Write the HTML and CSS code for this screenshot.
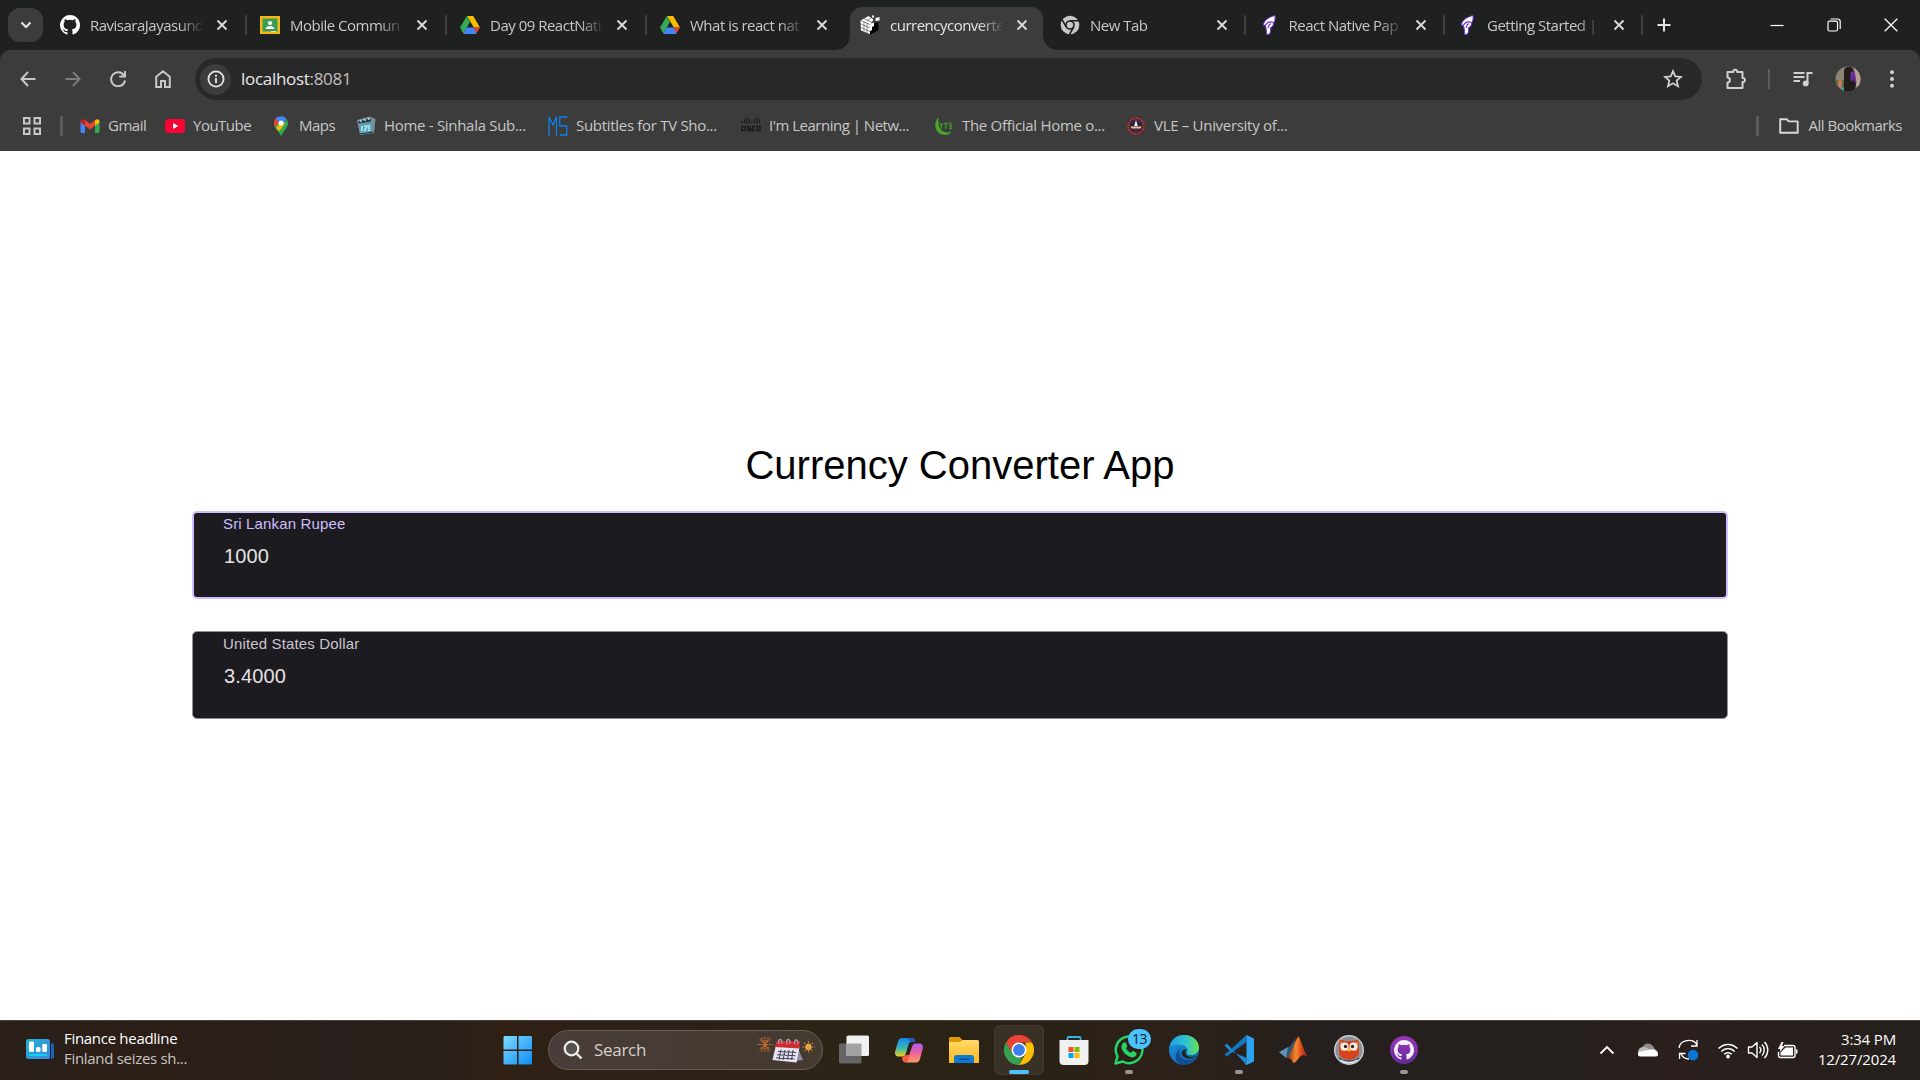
FILE: index.html
```html
<!DOCTYPE html>
<html lang="en">
<head>
<meta charset="utf-8">
<title>currencyconverter</title>
<link rel="stylesheet" href="styles.css">
</head>
<body>
<svg class="defs" width="0" height="0">
  <defs>
    <linearGradient id="gWin" x1="0" y1="0" x2="1" y2="1"><stop offset="0" stop-color="#7fdcff"/><stop offset="1" stop-color="#0a8cf5"/></linearGradient>
    <linearGradient id="gNews" x1="0" y1="0" x2="1" y2="1"><stop offset="0" stop-color="#22b5cf"/><stop offset="1" stop-color="#3b85e0"/></linearGradient>
    <linearGradient id="gCopA" x1="0" y1="0" x2="0" y2="1"><stop offset="0" stop-color="#1684ea"/><stop offset=".55" stop-color="#37b8b2"/><stop offset="1" stop-color="#f4d01c"/></linearGradient>
    <linearGradient id="gCopB" x1="0" y1="0" x2="0" y2="1"><stop offset="0" stop-color="#a95cf0"/><stop offset=".5" stop-color="#ef5f9e"/><stop offset="1" stop-color="#ff9c62"/></linearGradient>
    <linearGradient id="gFold" x1="0" y1="0" x2="0" y2="1"><stop offset="0" stop-color="#ffd969"/><stop offset="1" stop-color="#fbb91e"/></linearGradient>
    <linearGradient id="gEdgeA" x1="0" y1="0" x2="1" y2="0"><stop offset="0" stop-color="#1c9fe2"/><stop offset=".55" stop-color="#2fc3d2"/><stop offset="1" stop-color="#66e04e"/></linearGradient>
    <linearGradient id="gEdgeB" x1="0" y1="0" x2="1" y2="1"><stop offset="0" stop-color="#1b9be2"/><stop offset="1" stop-color="#0c59a4"/></linearGradient>
    <linearGradient id="gMat" x1="0" y1="0" x2="1" y2="0"><stop offset="0" stop-color="#7c1e14"/><stop offset=".45" stop-color="#f58a2d"/><stop offset=".7" stop-color="#d94b1c"/><stop offset="1" stop-color="#8d1d12"/></linearGradient>
    <linearGradient id="gGit" x1="0" y1="0" x2="0" y2="1"><stop offset="0" stop-color="#9a35b8"/><stop offset="1" stop-color="#652b98"/></linearGradient>
    <symbol id="close" viewBox="0 0 12 12"><path d="M1.500 1.500l9 9M10.500 1.500l-9 9" stroke="#d8d8d8" stroke-width="1.900"/></symbol>
    <symbol id="github" viewBox="0 0 16 16"><path d="M8 0a8 8 0 0 0-2.53 15.59c.4.07.55-.17.55-.38v-1.49c-2.23.49-2.7-.94-2.7-.94-.36-.93-.89-1.17-.89-1.17-.73-.5.05-.49.05-.49.81.06 1.23.83 1.23.83.72 1.23 1.88.87 2.34.67.07-.52.28-.87.5-1.07-1.77-.2-3.64-.89-3.64-3.95 0-.87.31-1.59.83-2.15-.09-.2-.36-1.02.07-2.12 0 0 .68-.22 2.2.82a7.6 7.6 0 0 1 4 0c1.53-1.04 2.2-.82 2.2-.82.44 1.1.17 1.92.08 2.12.51.56.82 1.28.82 2.15 0 3.07-1.87 3.75-3.65 3.95.29.25.54.73.54 1.48v2.19c0 .21.15.46.55.38A8 8 0 0 0 8 0z"/></symbol>
    <symbol id="drive" viewBox="0 0 20 18"><path fill="#fbbc04" d="M7 0h6.200L20 11.400h-6.200z"/><path fill="#34a853" d="M6.800 0L0 11.600l3.400 6L10 6z"/><path fill="#ea4335" d="M13.800 11.400H20l-3.800 6.400z"/><path fill="#4285f4" d="M6.400 11.600h7.300l2.800 6.300H3.300z"/></symbol>
    <symbol id="feather" viewBox="0 0 20 20"><path d="M16 .500C10 2 5 5 4.200 10.500l2.300-.6C6.500 12.500 8 15 7.500 19.500l2.800-.3c1.500-2 1.500-4 1-6.500 2.200-.7 3.200-2 3.200-4.600C15.700 6.500 16.500 4 16 .500z" fill="#fff" stroke="#6e32d6" stroke-width="1"/><path d="M6.500 10c2-3 4-4 8-2.500M9 13c.5-2.500 1.200-3.500 2.700-4.500" stroke="#6e32d6" stroke-width="1.200" fill="none"/></symbol>
  </defs>
</svg>
<div class="screen">

<header class="browser">
  <div class="tabstrip">
    <button class="tab-search"><svg width="12" height="8" viewBox="0 0 12 8"><path d="M1.500 1.500L6 6l4.500-4.500" fill="none" stroke="#e8e8e8" stroke-width="2"/></svg></button>
    <div class="tab"><svg class="fav" fill="#fff"><use href="#github"/></svg><span class="label">RavisaraJayasund</span><svg class="x"><use href="#close"/></svg></div>
    <div class="tab"><svg class="fav" viewBox="0 0 20 20"><path fill="#f4b915" d="M0 1h20v18H0z"/><path fill="#3c9c56" d="M2.500 3.500h15v13h-15z"/><circle cx="10" cy="8" r="2.100" fill="#fff"/><path fill="#fff" d="M5.500 14c.5-4 8.500-4 9 0z"/><path fill="#d9d9d9" d="M11 16h5v1h-5z"/></svg><span class="label">Mobile Commun</span><svg class="x"><use href="#close"/></svg></div>
    <div class="tab"><svg class="fav drv"><use href="#drive"/></svg><span class="label">Day 09 ReactNati</span><svg class="x"><use href="#close"/></svg></div>
    <div class="tab nosep"><svg class="fav drv"><use href="#drive"/></svg><span class="label">What is react nat</span><svg class="x"><use href="#close"/></svg></div>
    <div class="tab active"><svg class="fav" viewBox="0 0 20 20"><path fill="#fff" d="M.500 5.500L8.500 1l5 3.500-2.500 4v11L1 15.500z"/><path fill="#000" d="M10 9.500l8.500-2.500V15L10 20z"/><path fill="#fff" d="M10 9l4-1.500v3.500l-2 1v3l-2 1z"/><path d="M1 5.500l9 4M1 9l9 4M1 12.500l9 4M4 6.500v10M7 8v10M4 3.500l8 4M7 6l4-3" stroke="#3c3c3c" stroke-width=".6" fill="none"/><path fill="#fff" d="M15.500 3l4-1v3.500l-4 .5zM12 .500h2v2h-2z"/></svg><span class="label">currencyconverte</span><svg class="x"><use href="#close"/></svg></div>
    <div class="tab narrow"><svg class="fav" viewBox="0 0 20 20"><circle cx="10" cy="10" r="9.300" fill="#c7c7c7"/><circle cx="10" cy="10" r="4" fill="#c7c7c7" stroke="#1f2020" stroke-width="1.600"/><path d="M10 5.800h9M6.300 12L2 4.600M13.700 12l-4.300 7.600" stroke="#1f2020" stroke-width="1.600"/></svg><span class="label">New Tab</span><svg class="x"><use href="#close"/></svg></div>
    <div class="tab narrow"><svg class="fav"><use href="#feather"/></svg><span class="label">React Native Pap</span><svg class="x"><use href="#close"/></svg></div>
    <div class="tab narrow"><svg class="fav"><use href="#feather"/></svg><span class="label">Getting Started |</span><svg class="x"><use href="#close"/></svg></div>
    <button class="plus"><svg width="14" height="14" viewBox="0 0 14 14"><path d="M7 .500v13M.500 7h13" stroke="#e3e3e3" stroke-width="2"/></svg></button>
    <div class="winctl">
      <svg width="14" height="14" viewBox="0 0 14 14"><path d="M.500 7.500h13" stroke="#fff" stroke-width="1.200"/></svg>
      <svg width="14" height="14" viewBox="0 0 14 14"><rect x="1" y="3.200" width="9.500" height="9.800" rx="1.500" fill="none" stroke="#fff" stroke-width="1.200"/><path d="M3.500 1h7.200a2.500 2.500 0 0 1 2.500 2.500V11" fill="none" stroke="#fff" stroke-width="1.200"/></svg>
      <svg width="14" height="14" viewBox="0 0 14 14"><path d="M.700.700l12.600 12.600M13.300.700L.700 13.300" stroke="#fff" stroke-width="1.300"/></svg>
    </div>
  </div>

  <div class="toolbar">
    <button class="tool"><svg width="16" height="16" viewBox="0 0 16 16"><path d="M15.500 8H1.500M8 1L1.500 8 8 15" fill="none" stroke="#c7c7c7" stroke-width="2"/></svg></button>
    <button class="tool"><svg width="16" height="16" viewBox="0 0 16 16"><path d="M.500 8h14M8 1l6.500 7L8 15" fill="none" stroke="#7c7c7c" stroke-width="2"/></svg></button>
    <button class="tool"><svg width="16" height="16" viewBox="0 0 16 16"><path d="M14 4.500A7 7 0 1 0 15 9.500M15 0v5.500H9.300" fill="none" stroke="#c7c7c7" stroke-width="2"/></svg></button>
    <button class="tool"><svg width="16" height="18" viewBox="0 0 16 18"><path d="M1.200 6.800L8 1.300l6.800 5.500V17H10v-6H6v6H1.200z" fill="none" stroke="#c7c7c7" stroke-width="2"/></svg></button>
    <div class="omnibox">
      <span class="info"><svg width="18" height="18" viewBox="0 0 18 18"><circle cx="9" cy="9" r="7.600" fill="none" stroke="#e3e3e3" stroke-width="1.800"/><path d="M9 8v5M9 4.800v1.900" stroke="#e3e3e3" stroke-width="1.900"/></svg></span>
      <span class="url">localhost<span>:8081</span></span>
      <svg class="star" width="20" height="20" viewBox="0 0 20 20"><path d="M10 2.200l2.300 5.200 5.700.5-4.300 3.700 1.300 5.600-5-3-5 3 1.300-5.600L2 7.900l5.700-.5z" fill="none" stroke="#d0d0d0" stroke-width="1.800"/></svg>
    </div>
    <button class="tool ext"><svg width="22" height="22" viewBox="0 0 22 22"><path d="M2.500 4H8.300C8 .900 12.500.900 12.200 4h5.300v6c3.300-.2 3.300 4.200 0 4v6h-15v-5.500c3.200 0 3.200-5 0-5z" fill="none" stroke="#d0d0d0" stroke-width="2" stroke-linejoin="round"/></svg></button>
    <i class="vsep"></i>
    <button class="tool media"><svg width="20" height="16" viewBox="0 0 20 16"><path d="M.500 2h11M.500 6h11M.500 10h6.500" stroke="#d0d0d0" stroke-width="2"/><path d="M14.500 12.500V2h5" fill="none" stroke="#d0d0d0" stroke-width="2"/><circle cx="12.700" cy="12.400" r="2.900" fill="#d0d0d0"/></svg></button>
    <svg class="avatar" viewBox="0 0 26 26"><clipPath id="av"><circle cx="13" cy="13" r="12.500"/></clipPath><g clip-path="url(#av)"><path fill="#8c8474" d="M0 0h26v26H0z"/><path fill="#627044" d="M0 14h9v12H0z"/><path fill="#b7a294" d="M19 0h7v20h-5z"/><path fill="#201c1a" d="M9 4c2-5 9-4 10 1l2 12-1 9H8l1-9z"/><path fill="#6b2f9c" d="M15.500 6l4-1 1 5 1 7-2-1-1-4-1 4-2-2z"/><path fill="#d07860" d="M4 13l3 2-1 8-3-3z"/><path fill="#38a39a" d="M6 22l3-1v5H6z"/></g></svg>
    <button class="tool menu"><svg width="6" height="20" viewBox="0 0 6 20" fill="#d0d0d0"><circle cx="3" cy="3.300" r="2"/><circle cx="3" cy="10" r="2"/><circle cx="3" cy="16.700" r="2"/></svg></button>
  </div>

  <nav class="bookmarks">
    <svg class="apps" width="20" height="20" viewBox="0 0 20 20" fill="none" stroke="#c7c7c7" stroke-width="2"><path d="M2 2h5.500v5.500H2zM12.500 2H18v5.500h-5.500zM2 12.500h5.500V18H2zM12.500 12.500H18V18h-5.500z"/></svg>
    <i class="vsep thick"></i>
    <a class="bm w1 tight"><svg viewBox="0 0 20 20"><path fill="#4285f4" d="M.500 5.500l4.500 3V17H2a1.500 1.500 0 0 1-1.500-1.500z"/><path fill="#34a853" d="M19.500 5.500L15 8.500V17h3a1.500 1.500 0 0 0 1.500-1.500z"/><path fill="#ea4335" d="M4 3.500l6 4.500 6-4.500v5.500l-6 4.500-6-4.500z"/><path fill="#c5221f" d="M.500 5.500C.500 3 3 2.500 5 4.200v5.300L.500 6.500z"/><path fill="#fbbc04" d="M19.500 5.500c0-2.500-2.500-3-4.500-1.300v5.300l4.500-3z"/></svg><span>Gmail</span></a>
    <a class="bm w2 tight"><svg viewBox="0 0 20 20"><rect y="3" width="20" height="14" rx="3.500" fill="#ff0033"/><path d="M8 7l5.300 3L8 13z" fill="#fff"/></svg><span>YouTube</span></a>
    <a class="bm w3 tight"><svg viewBox="0 0 20 20"><path fill="#34a853" d="M10 20c-1-4-7-7-7-13h14c0 6-6 8-7 13z"/><path fill="#fbbc04" d="M5 12L12 4l3 4-7 7z"/><path fill="#ea4335" d="M3 7c0-2 .600-3.500 1.500-4.500l4 3.500-4.500 5C3.300 9.500 3 8.500 3 7z"/><path fill="#4285f4" d="M4.500 2.500c3-3.500 9-3 11.500 1L11 9 8 6z"/><path fill="#34a853" d="M16 3.500c1.500 2.500 1 5.500-.500 7.500L10 20l-1.500-4z"/><circle cx="10" cy="7" r="2.500" fill="#fff"/></svg><span>Maps</span></a>
    <a class="bm w4"><svg viewBox="0 0 20 20"><path fill="#79919a" d="M1 4l13-3.500L19.500 3l-1.500 14-14 2z"/><path fill="#163f50" d="M2 5.500l13-3v3l-12 2z"/><path fill="#4faec3" d="M4 9l12-1.500-.500 8-10.500 2z"/><path d="M6 10v5M8 10h3l-2.500 5M13 9v6M4 4l1.500 2M8 3l1.500 2M12 2l1.500 2" stroke="#e4f1f2" stroke-width="1.200" fill="none"/><path d="M4 18l13-2" stroke="#1c333c"/></svg><span>Home - Sinhala Sub...</span></a>
    <a class="bm w5"><svg viewBox="0 0 20 20"><path d="M1 20V1l4 8 3.500-8v19M19.500 1h-7.700v9h7v9h-7" fill="none" stroke="#0b80e8" stroke-width="1.300"/></svg><span>Subtitles for TV Sho...</span></a>
    <a class="bm w6 tight"><svg viewBox="0 0 20 20"><path d="M1 5v2M3.500 3v4M6 1v7M8.500 3v4M11 5v2M13.500 3v4M16 1v7M18.500 3v4" stroke="#191919" stroke-width="1.100"/><path d="M4.500 10.500H2.200a2 2 0 0 0 0 4H4.500V10M9.500 10.500H7V12.500H9.500v2H6.500M14 10.500h-2.500v4H14M16 10.500h3v4h-3z" stroke="#191919" stroke-width="1.500" fill="none"/></svg><span>I'm Learning | Netw...</span></a>
    <a class="bm w7"><svg viewBox="0 0 20 20"><path d="M4 2C0 8 1 16 8 18c4 1 7 0 9-1.500C10 18 3 15 4 2z" fill="#4ba332" stroke="#4ba332" stroke-width=".8"/><path d="M5.500 7l2 2.500L9 7M7.500 9.500L7 13M10 7.500h4M12 7.500l-.5 5.500M18 7.500h-2.500V10h2v2.500H15" fill="none" stroke="#3c9427" stroke-width="1.400"/></svg><span>The Official Home o...</span></a>
    <a class="bm w8"><svg viewBox="0 0 20 20"><circle cx="10" cy="10" r="9.700" fill="#6b2433"/><circle cx="10" cy="10" r="8" fill="none" stroke="#a36a45" stroke-dasharray="1.500 1"/><circle cx="10" cy="10" r="6" fill="#292447"/><path fill="#fff" d="M10 4l1.700 6h-3.400z"/><path fill="#f0c08b" d="M4.500 10.500h11l-1 2H5.500z"/><path fill="#4b2a45" d="M6 13h8l-4 3z"/></svg><span>VLE – University of...</span></a>
    <i class="vsep thick last"></i>
    <a class="bm all tight"><svg viewBox="0 0 20 20"><path d="M1.200 3.200h6.500l2 2.200h9v11.400H1.200z" fill="none" stroke="#d8d8d8" stroke-width="1.900" stroke-linejoin="round"/></svg><span>All Bookmarks</span></a>
  </nav>
</header>

<main class="page">
  <h1>Currency Converter App</h1>
  <div class="field focused"><label>Sri Lankan Rupee</label><div class="value">1000</div></div>
  <div class="field"><label>United States Dollar</label><div class="value">3.4000</div></div>
</main>

<footer class="taskbar">
  <div class="widget">
    <svg width="28" height="20" viewBox="0 0 28 20"><rect x="20" y="4" width="8" height="16" rx="2.500" fill="#1665b8"/><path d="M24.500 3v17" stroke="#171a26"/><rect width="24" height="20" rx="2.500" fill="url(#gNews)"/><rect x="3" y="2.500" width="5" height="10.500" rx="1.200" fill="#fff"/><rect x="10" y="8" width="4.500" height="5" rx="1.500" fill="#fff"/><rect x="16.300" y="5" width="4.700" height="8" rx="1.200" fill="#fff"/><path d="M3 16h18" stroke="#10d1f1" stroke-width="2"/></svg>
    <div class="news"><span class="n1">Finance headline</span><span class="n2">Finland seizes sh...</span></div>
  </div>
  <svg class="start" width="30" height="30" viewBox="0 0 30 30"><path fill="url(#gWin)" d="M1.500 1H14v13.500H.500V2zM15.500 1H28l1 1v12.500H15.500zM.500 16H14v13.500H1.500l-1-1zM15.500 16H29v12.500l-1 1H15.500z"/></svg>
  <div class="search">
    <svg width="20" height="20" viewBox="0 0 20 20"><circle cx="8.500" cy="8.500" r="6.800" fill="#5b514c" stroke="#ececec" stroke-width="2.200"/><path d="M13.500 13.500l5 5" stroke="#ececec" stroke-width="2.400"/></svg>
    <span>Search</span>
    <svg class="cal" width="58" height="28" viewBox="0 0 58 28"><g stroke="#c9702d" stroke-width="1.200"><path d="M8 1v15M.500 8.500h15M2.700 3.200l10.600 10.600M13.300 3.200L2.700 13.800M4.500 1.500l7 14M11.500 1.500l-7 14" stroke-dasharray="2 .8"/></g><path fill="#8c8aa5" d="M41 12l5 12-7 1z"/><path fill="#e7e5f4" d="M18.500 11h24L39.500 26.500 15.500 24z"/><path fill="#d02c2e" d="M19.500 5H43l-.700 7.500L18 11z"/><path d="M21 15.500l18 1M20 18.700l18.500 1M19 21.800l18.500 1.200M24 13.500l-2 10M28 14l-2 10M32 14l-1.500 10M36 14l-1.500 10" stroke="#45435a" stroke-width="1.100"/><path d="M22 8c-2-6 4-6 3 0M30 8c-2-6 4-6 3 0M38 8.500c-2-6 4-6 3 0" fill="none" stroke="#a09fb1" stroke-width="1.300"/><circle cx="51.500" cy="11" r="3" fill="#ffc955"/><path d="M51.500 5v12M45.500 11h12M47.300 6.800l8.400 8.400M55.700 6.800l-8.400 8.400" stroke="#d99139" stroke-width="1.200" stroke-dasharray="1.500 .8"/></svg>
  </div>
  <div class="apps-row">
    <div class="app"><svg viewBox="0 0 30 30"><rect y="8.500" width="22.500" height="20" rx="1.500" fill="#646464"/><rect x="7.500" y=".500" width="22.500" height="20.500" rx="1.500" fill="#f1f1f1"/><path fill="#a2a2a2" d="M7.500 8.500h15V21h-15z"/></svg></div>
    <div class="app"><svg viewBox="0 0 30 30"><path fill="url(#gCopA)" d="M8 3h9.500c2.500 0 3 1.500 3.500 3.500h-2.500c-2.500 0-3.500 1-4.200 3.500L12 18c-.800 2.500-1.500 3.500-4 3.500H4.500c-3 0-4-2.500-3.200-5.500L4 6.500C4.700 4.200 6 3 8 3z"/><path fill="#2457cd" d="M14 3h3.500c2.500 0 3 1.500 3.500 3.500h-2.500C16 6.500 15 6 14 3z"/><path fill="url(#gCopB)" d="M22 27.500h-9.500c-2.500 0-4-1.500-4.500-4h3c2.500 0 3.500-1 4.200-3.500L18 12c.800-2.500 1.500-3.500 4-3.500h3.500c3 0 4 2.500 3.200 5.500L26 24c-.700 2.300-2 3.500-4 3.500z"/><path fill="#f45a3d" d="M8 22l4-2h3.500c-1 5-1.500 7-3.500 7s-3.500-2-4-5z"/></svg></div>
    <div class="app"><svg viewBox="0 0 30 30"><path fill="#dc9a0b" d="M0 3.500A1.500 1.500 0 0 1 1.500 2h9l3 3H28v10H0z"/><path fill="url(#gFold)" d="M0 7h11l3-2h14.500A1.500 1.500 0 0 1 30 6.500V28H0z"/><path fill="#0f7bd0" d="M5 28v-5.500a2.500 2.500 0 0 1 2.500-2.500h15a2.500 2.500 0 0 1 2.500 2.500V28z"/><path d="M10 24.300h10" stroke="#0a4d94" stroke-width="1.500"/></svg></div>
    <div class="app current"><svg viewBox="0 0 30 30"><path fill="#ea4335" d="M2 7.500A15 15 0 0 1 28 7.500H15L8.500 19z"/><path fill="#fbbc04" d="M28 7.500A15 15 0 0 1 15 30l6.500-11.200V7.500z"/><path fill="#34a050" d="M15 30A15 15 0 0 1 2 7.500l6.500 11.300L15 22.500l3.600-.5z"/><circle cx="15" cy="15" r="7.500" fill="#fff"/><circle cx="15" cy="15" r="5.900" fill="#3b7fe8"/></svg></div>
    <div class="app"><svg viewBox="0 0 30 30"><path d="M8.500 6V3a1 1 0 0 1 1-1h11a1 1 0 0 1 1 1v3" fill="none" stroke="#35b3e6" stroke-width="1.800"/><path d="M.500 5h29v21a4 4 0 0 1-4 4h-21a4 4 0 0 1-4-4z" fill="#f0f0f0"/><path fill="#f25022" d="M9.500 12h5v5h-5z"/><path fill="#7fba00" d="M15.500 12h5v5h-5z"/><path fill="#00a4ef" d="M9.500 18h5v5h-5z"/><path fill="#ffb900" d="M15.500 18h5v5h-5z"/></svg></div>
    <div class="app open"><svg viewBox="0 0 30 30"><path d="M1.500 28.500l2-7.200A13.300 13.300 0 1 1 8.800 26.500z" fill="none" stroke="#25d366" stroke-width="2.500" stroke-linejoin="round"/><path fill="#25d366" d="M10 7.500c1.500-.500 2 0 3.200 3.500.200.800-1 1.500-1.200 2.200 1.500 2.500 3 3.800 5 4.600.700-.300 1.300-1.700 2-1.700l3.500 1.700c.500 4-3.500 5-6 4.200C11.500 20.300 8 16 7.500 12.500c-.300-2 1-4.500 2.500-5z"/></svg><b class="badge">13</b></div>
    <div class="app"><svg viewBox="0 0 30 30"><circle cx="15" cy="15" r="15" fill="url(#gEdgeB)"/><path fill="url(#gEdgeA)" d="M.500 12C2 4 8 0 15 0c9 0 15 6 15 12.500 0 5-4 7.500-8 7.500-3 0-4.500-1-4-2 2-3-.500-7.500-6-8C7 9.500 2 10.500.500 12z"/><path fill="#134d94" d="M11 14c-3 8 4 14 16 9.500-5 6-13 8-18 4.500-4-4-2.500-11 2-14z"/><path fill="#282019" d="M17.500 14.500C15 17 16 22 23 22c3 0 5-1 6-2-3 4.500-14 5-16-.5-.800-2.500.5-5 4.500-5z"/></svg></div>
    <div class="app open"><svg viewBox="0 0 30 30"><path fill="#1378bd" d="M22.500 0L5.500 15.500.500 19.300l2.300 2.200L22.500 7z"/><path fill="#1b8bd5" d="M22.500 30L2.800 8.500.500 10.500l5 5L22.500 23z"/><path fill="#2ba3ee" d="M22.500 0L30 3.500v23L22.500 30l-2-1.500c1.500.5 2-.500 2-1.500z"/></svg></div>
    <div class="app"><svg viewBox="0 0 30 30"><path fill="#5a93b7" d="M0 17l9-5 3 7-5 4z"/><path fill="#34586f" d="M9 12c3 0 5-6 8-9l-5 17-5 3z"/><path fill="url(#gMat)" d="M19.500 1c2.500 4 5 15 9.500 21-4-2.500-6-3-9 1-2.500 3-4 5-6 5-1-3-2.500-5-7-5C13 20 15 7 19.500 1z"/></svg></div>
    <div class="app"><svg viewBox="0 0 30 30"><circle cx="15" cy="15" r="14.300" fill="#8a9198" stroke="#c9ced2" stroke-width="1.400"/><path fill="#d7431f" d="M5.500 4.500L11 6h8l5.500-1.500.5 13C25 27 5 27 5 17.500z"/><path fill="#f27b3b" d="M6 6l9 7 9-7-1 10H7z"/><circle cx="10.500" cy="11.500" r="4" fill="#f5f2e9"/><circle cx="19.500" cy="11.500" r="4" fill="#f5f2e9"/><circle cx="11.500" cy="11.500" r="1.700" fill="#392215"/><circle cx="18.500" cy="11.500" r="1.700" fill="#392215"/><path fill="#f8c437" d="M13.500 13.500h3L15 17.500z"/><path d="M5 23c5 4 15 4 20 0" stroke="#34495e" stroke-width="1.500" fill="none"/><path d="M6.500 25c5 3.500 12 3.500 17 0" stroke="#e7e9ec" stroke-width="1.500" fill="none"/></svg></div>
    <div class="app open"><svg viewBox="0 0 30 30"><circle cx="15" cy="15" r="14" fill="url(#gGit)"/><svg x="5" y="5" width="20" height="20" fill="#f4eff8"><use href="#github"/></svg></svg></div>
  </div>
  <div class="tray">
    <svg class="chev" width="16" height="10" viewBox="0 0 16 10"><path d="M1.500 8.500L8 2l6.500 6.500" fill="none" stroke="#fff" stroke-width="1.800"/></svg>
    <svg class="cloud" width="22" height="14" viewBox="0 0 22 14"><path fill="#8f8d8c" d="M5 5c2-6 10-6 12 0l4 4-9 3z"/><path fill="#bdbbba" d="M1 10c0-4 2.500-6 5.500-6C10 3.500 14 8 17 10l-5 3z"/><path fill="#fff" d="M3 13.500c-2 0-3-3-1-4.500L13 6.500c3-.500 5 0 7 2 2 2 1 5-1 5z"/></svg>
    <svg class="sync" width="22" height="22" viewBox="0 0 22 22"><path d="M2 9c1-9 15-10 18-2.500M20 1v6h-6M12 20c-4 0-6-1-8-5M8.500 14.500H2.500V20" fill="none" stroke="#fff" stroke-width="1.300"/><circle cx="16" cy="16" r="5.200" fill="#0878d8"/></svg>
    <svg class="wifi" width="22" height="17" viewBox="0 0 22 17"><path d="M1.500 6.500c5.500-5.500 13.500-5.500 19 0M4.300 9.500c4-4 9.400-4 13.400 0M7.200 12.300c2.200-2.200 5.400-2.200 7.600 0" fill="none" stroke="#fff" stroke-width="1.500"/><circle cx="11" cy="14.500" r="1.900" fill="#fff"/></svg>
    <svg class="vol" width="22" height="20" viewBox="0 0 22 20"><path d="M1.500 7h3.500l5-4.500v15L5 13H1.500z" fill="none" stroke="#fff" stroke-width="1.400" stroke-linejoin="round"/><path d="M12.500 7c1.600 1.700 1.600 4.300 0 6M15 4.500c3 3 3 8 0 11M17.500 2c4.300 4.500 4.300 11.500 0 16" fill="none" stroke="#fff" stroke-width="1.400"/></svg>
    <svg class="bat" width="22" height="18" viewBox="0 0 22 18"><path d="M7 4.500h9a2 2 0 0 1 2 2v8a2 2 0 0 1-2 2H3.500a2 2 0 0 1-2-2V11" fill="none" stroke="#fff" stroke-width="1.400"/><path fill="#fff" d="M8.500 6.500H16v8H3.500v-3zM19 8.500h1.500v4H19zM4.500 1L1 8h2.500l-1 3.500L7.500 5H5l1.500-4z"/></svg>
    <div class="clock"><span class="t">3:34 PM</span><span class="d">12/27/2024</span></div>
  </div>
</footer>
</div>
</body>
</html>
```
FILE: styles.css
```css
* { box-sizing: border-box; }
body { margin: 0; font-family: "Open Sans", "Noto Sans", sans-serif; overflow: hidden; }
button { border: 0; padding: 0; background: none; font: inherit; }
svg { display: block; flex: none; }
.defs { position: absolute; }
.screen { width: 1920px; height: 1080px; display: flex; flex-direction: column; background: #fff; }

/* Browser chrome */
.browser { height: 151px; background: #1f2020; flex: none; }
.tabstrip { height: 50px; display: flex; align-items: center; }
.tab-search { width: 35px; height: 34px; margin: 0 7px 0 8px; border-radius: 12px; background: #3c3c3c; display: grid; place-items: center; }
.tab { position: relative; width: 200px; height: 43px; margin-top: 7px; padding: 0 0 7px 10px; display: flex; align-items: center; flex: none; }
.tab.narrow { width: 198.500px; }
.fav { width: 20px; height: 20px; }
.fav.drv { width: 20px; height: 18px; }
.label { width: 112px; margin-left: 10px; font-size: 15px; line-height: 20px; letter-spacing: -.5px; white-space: nowrap; overflow: hidden; color: #c7c7c7; -webkit-mask-image: linear-gradient(90deg, #000 80%, transparent 102%); mask-image: linear-gradient(90deg, #000 80%, transparent 102%); }
.x { width: 12px; height: 12px; margin-left: 14px; }
.tab::after { content: ""; position: absolute; left: 195px; top: 8px; width: 2px; height: 20px; background: #404141; border-radius: 1px; }
.tab.narrow::after { left: 194px; }
.tab.nosep::after { display: none; }
.tab.active { width: 193px; margin-right: 7px; background: #3c3c3c; border-radius: 12px 12px 0 0; }
.tab.active .label { color: #e3e3e3; }
.tab.active::before, .tab.active::after { content: ""; position: absolute; left: -14px; top: auto; bottom: 0; width: 14px; height: 14px; border-radius: 0; background: radial-gradient(circle at 0 0, transparent 13.500px, #3c3c3c 14px); }
.tab.active::after { left: 193px; background: radial-gradient(circle at 100% 0, transparent 13.500px, #3c3c3c 14px); }
.plus { width: 40px; display: grid; place-items: center; margin-left: -2px; }
.winctl { margin-left: auto; padding-right: 22px; display: flex; gap: 43px; }

.toolbar { height: 58px; background: #3c3c3c; border-radius: 10px 10px 0 0; padding-left: 5px; display: flex; align-items: center; }
.tool { width: 45px; height: 40px; display: grid; place-items: center; flex: none; }
.omnibox { width: 1507px; height: 42px; margin-left: 10px; padding-left: 5px; border-radius: 21px; background: #282828; display: flex; align-items: center; flex: none; }
.info { width: 31px; height: 31px; border-radius: 50%; background: #3c3c3c; display: grid; place-items: center; }
.url { margin: 0 0 1px 10px; font-size: 17px; letter-spacing: -.3px; color: #e8e8e8; }
.url span { color: #c0c0c0; }
.star { margin: 0 19px 0 auto; }
.vsep { width: 2px; height: 20px; background: #5c5c5c; flex: none; }
.ext { width: 66px; padding-left: 2px; }
.media { width: 65px; }
.avatar { width: 26px; height: 26px; }
.menu { width: 62px; }

.bookmarks { height: 43px; background: #3c3c3c; padding: 0 18px 8px 22px; display: flex; align-items: center; }
.vsep.thick { width: 3px; border-radius: 1px; }
.apps { margin-right: 18px; }
.bm { display: flex; align-items: center; gap: 8px; font-size: 15px; line-height: 20px; letter-spacing: -.3px; color: #c7c7c7; white-space: nowrap; flex: none; }
.bm svg { width: 20px; height: 20px; }
.bm span { margin-top: -1px; }
.tight { letter-spacing: -.5px; }
.w1 { width: 85px; margin-left: 17px; }
.w2 { width: 106px; }
.w3 { width: 85px; }
.w4 { width: 192px; }
.w5 { width: 193px; }
.w6 { width: 193px; }
.w7 { width: 192px; }
.last { margin-left: auto; }
.all { margin-left: 20px; gap: 10px; }

/* Converter */
.page { flex: 1; display: flex; flex-direction: column; align-items: center; padding-top: 288px; font-family: "Liberation Sans", Arial, sans-serif; }
h1 { margin: 0 0 20px; font-size: 40px; font-weight: 400; line-height: 52px; color: #000; }
.field { width: 1536px; height: 88px; margin-bottom: 32px; padding: 2px 30px; border: 1px solid #938f99; border-radius: 5px; background: #1c1b1f; }
.field.focused { border: 2px solid #d0bcff; padding: 1px 29px; }
.field label { display: block; font-size: 15px; line-height: 20px; letter-spacing: .15px; color: #cac4d0; }
.field.focused label { color: #d0bcff; }
.field .value { margin-top: 10px; padding-left: 1px; font-size: 20px; line-height: 24px; letter-spacing: .15px; color: #e6e1e5; }

/* Taskbar */
.taskbar { height: 60px; flex: none; display: flex; align-items: center; color: #fff; box-shadow: inset 0 1px #45403a; background: linear-gradient(90deg, #2a2019 0, #2b1e17 8%, #281f1c 18%, #2a2019 24%, #302014 26%, #2c2018 35%, #2c2416 43%, #2a2116 55%, #2c2118 61%, #25201d 68%, #24201d 80%, #2a1f1c 87%, #25201d 100%); }
.widget { width: 477px; padding: 0 0 2px 26px; display: flex; align-items: center; gap: 10px; }
.news { display: flex; flex-direction: column; font-size: 15px; line-height: 20px; letter-spacing: -.3px; white-space: nowrap; margin-top: -2px; }
.n2 { color: #c9c4c0; }
.start { margin-left: 26px; }
.search { width: 275px; height: 40px; margin-left: 15px; padding: 0 7px 0 14px; border: 1px solid #665f57; border-radius: 20px; background: linear-gradient(90deg, #483d38, #443a30); display: flex; align-items: center; }
.search span { margin: 0 0 1px 11px; font-size: 17px; letter-spacing: -.3px; color: #d6d0cb; }
.cal { margin-left: auto; }
.apps-row { display: flex; margin-left: 6px; gap: 5px; }
.app { position: relative; width: 50px; height: 50px; border-radius: 6px; display: grid; place-items: center; border: 1px solid transparent; }
.app > svg { width: 30px; height: 30px; }
.app.current { background: #3a3126; border-color: #443c31; }
.app.current::after, .app.open::after { content: ""; position: absolute; bottom: 0; left: 20px; width: 8px; height: 4px; border-radius: 2px; background: #9b9793; }
.app.current::after { left: 14px; width: 20px; background: #4cc2ff; }
.badge { position: absolute; left: 23px; top: 3px; width: 23px; height: 20px; border-radius: 10px; background: #4cc2ff; color: #10222c; font-size: 14px; letter-spacing: -.5px; font-weight: 400; line-height: 20px; text-align: center; }
.tray { margin-left: auto; display: flex; align-items: center; padding-right: 24px; }
.chev { margin-bottom: 1px; }
.cloud { margin-left: 22px; }
.sync { margin-left: 18px; }
.wifi { margin-left: 18px; }
.vol { margin-left: 8px; }
.bat { margin-left: 8px; }
.clock { width: 97px; display: flex; flex-direction: column; align-items: flex-end; font-size: 15px; line-height: 20px; letter-spacing: -.15px; white-space: nowrap; margin-top: -3px; }
```
